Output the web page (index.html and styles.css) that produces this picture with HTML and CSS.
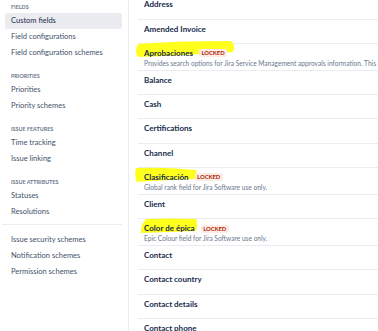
FILE: index.html
```html
<!DOCTYPE html>
<html lang="en">
<head>
    <meta charset="UTF-8">
    <meta name="viewport" content="width=device-width, initial-scale=1.0">
    <title>Custom fields</title>
    <link rel="stylesheet" href="styles.css">
</head>
<body>
    <div class="page">
        <aside class="sidebar">
            <div class="nav-group">
                <h3 class="nav-heading">Fields</h3>
                <a class="nav-item is-selected">Custom fields</a>
                <a class="nav-item">Field configurations</a>
                <a class="nav-item">Field configuration schemes</a>
            </div>
            <div class="nav-group">
                <h3 class="nav-heading">Priorities</h3>
                <a class="nav-item">Priorities</a>
                <a class="nav-item">Priority schemes</a>
            </div>
            <div class="nav-group">
                <h3 class="nav-heading">Issue features</h3>
                <a class="nav-item">Time tracking</a>
                <a class="nav-item">Issue linking</a>
            </div>
            <div class="nav-group">
                <h3 class="nav-heading">Issue attributes</h3>
                <a class="nav-item">Statuses</a>
                <a class="nav-item">Resolutions</a>
            </div>
            <hr class="nav-divider">
            <div class="nav-group">
                <a class="nav-item">Issue security schemes</a>
                <a class="nav-item">Notification schemes</a>
                <a class="nav-item">Permission schemes</a>
            </div>
        </aside>

        <main class="content">
            <ul class="field-list">
                <li class="field"><span class="field-name">Address</span></li>
                <li class="field"><span class="field-name">Amended Invoice</span></li>
                <li class="field field--described">
                    <!-- highlighter mark from the screenshot -->
                    <svg class="marker marker--one" viewBox="0 0 102 18" preserveAspectRatio="none">
                        <path d="M4 4 Q40 1 97 1 Q102 6 99 12 Q60 15 4 17 Q0 11 4 4 Z"/>
                    </svg>
                    <div class="field-title">
                        <span class="field-name">Aprobaciones</span>
                        <span class="lozenge">Locked</span>
                    </div>
                    <p class="field-desc">Provides search options for Jira Service Management approvals information. This custom field is created programmatically and required by Jira Service Management.</p>
                </li>
                <li class="field"><span class="field-name">Balance</span></li>
                <li class="field"><span class="field-name">Cash</span></li>
                <li class="field"><span class="field-name">Certifications</span></li>
                <li class="field"><span class="field-name">Channel</span></li>
                <li class="field field--described">
                    <svg class="marker marker--two" viewBox="0 0 64 15" preserveAspectRatio="none">
                        <path d="M2 1 Q30 0 62 3 Q64 8 61 12 Q30 13 3 15 Q0 8 2 1 Z"/>
                    </svg>
                    <div class="field-title">
                        <span class="field-name">Clasificación</span>
                        <span class="lozenge">Locked</span>
                    </div>
                    <p class="field-desc">Global rank field for Jira Software use only.</p>
                </li>
                <li class="field"><span class="field-name">Client</span></li>
                <li class="field field--described">
                    <svg class="marker marker--three" viewBox="0 0 58 16" preserveAspectRatio="none">
                        <path d="M6 1 Q30 0 56 1 Q58 7 56 13 Q30 14 1 15 Q0 8 6 1 Z"/>
                    </svg>
                    <div class="field-title">
                        <span class="field-name">Color de épica</span>
                        <span class="lozenge">Locked</span>
                    </div>
                    <p class="field-desc">Epic Colour field for Jira Software use only.</p>
                </li>
                <li class="field"><span class="field-name">Contact</span></li>
                <li class="field"><span class="field-name">Contact country</span></li>
                <li class="field"><span class="field-name">Contact details</span></li>
                <li class="field"><span class="field-name">Contact phone</span></li>
            </ul>
        </main>
    </div>
</body>
</html>
```

FILE: styles.css
```css
html, body {
    margin: 0;
    padding: 0;
    background-color: #fff;
    overflow: hidden;
}

body {
    font-family: Lato, "Liberation Sans", sans-serif;
    color: #172b4d;
}

.page {
    display: flex;
    height: 331px;
}

/* left navigation */

.sidebar {
    width: 129px;
    flex-shrink: 0;
    border-right: 1px solid #ebecf0;
    padding: 2px 6px 0 5px;
    box-sizing: border-box;
}

.nav-group {
    display: flex;
    flex-direction: column;
    margin-bottom: 10px;
}

.nav-group:nth-child(4) {
    margin-bottom: 4px;
}

.nav-heading {
    margin: 0;
    padding-left: 6px;
    height: 11px;
    line-height: 11px;
    font-size: 5.4px;
    font-weight: 700;
    text-transform: uppercase;
    color: #6b778c;
}

.nav-item {
    display: block;
    height: 16px;
    line-height: 16px;
    padding-left: 6px;
    font-size: 7.5px;
    color: #44516a;
    border-radius: 2px;
    white-space: nowrap;
}

.nav-item.is-selected {
    background-color: #ebecf0;
    color: #172b4d;
}

.nav-divider {
    border: none;
    border-top: 1px solid #ebecf0;
    margin: 0 0 7px -3px;
}

/* custom field list */

.content {
    flex: 1;
    padding-left: 9px;
    min-width: 0;
}

.field-list {
    list-style: none;
    margin: -4.8px 0 0 0;
    padding: 0;
}

.field {
    position: relative;
    padding: 4px 0 8.3px 6px;
    border-bottom: 1px solid #ebecf0;
    font-size: 8px;
    line-height: 11px;
}

.field--described {
    padding-bottom: 1.9px;
}

.field-title {
    position: relative;
    display: flex;
    align-items: center;
    gap: 6px;
    height: 11px;
}

.field-name {
    position: relative;
    display: block;
    font-size: 8px;
    font-weight: 700;
    line-height: 11px;
    white-space: nowrap;
}

.lozenge {
    display: block;
    font-size: 5.8px;
    font-weight: 700;
    line-height: 8px;
    padding: 0 2.5px;
    text-transform: uppercase;
    color: #a82400;
    background-color: #ffebe6;
    border-radius: 2px;
}

.field-desc {
    position: relative;
    margin: 0;
    font-size: 6.6px;
    line-height: 9px;
    color: #6b778c;
    white-space: nowrap;
}

/* yellow highlighter strokes drawn over the screenshot */

.marker {
    position: absolute;
    fill: #ffff1e;
}

.marker--one {
    left: -4px;
    top: -4px;
    width: 102px;
    height: 18px;
}

.marker--two {
    left: -4px;
    top: -1px;
    width: 64px;
    height: 15px;
}

.marker--three {
    left: 2px;
    top: -1px;
    width: 58px;
    height: 16px;
}
```
